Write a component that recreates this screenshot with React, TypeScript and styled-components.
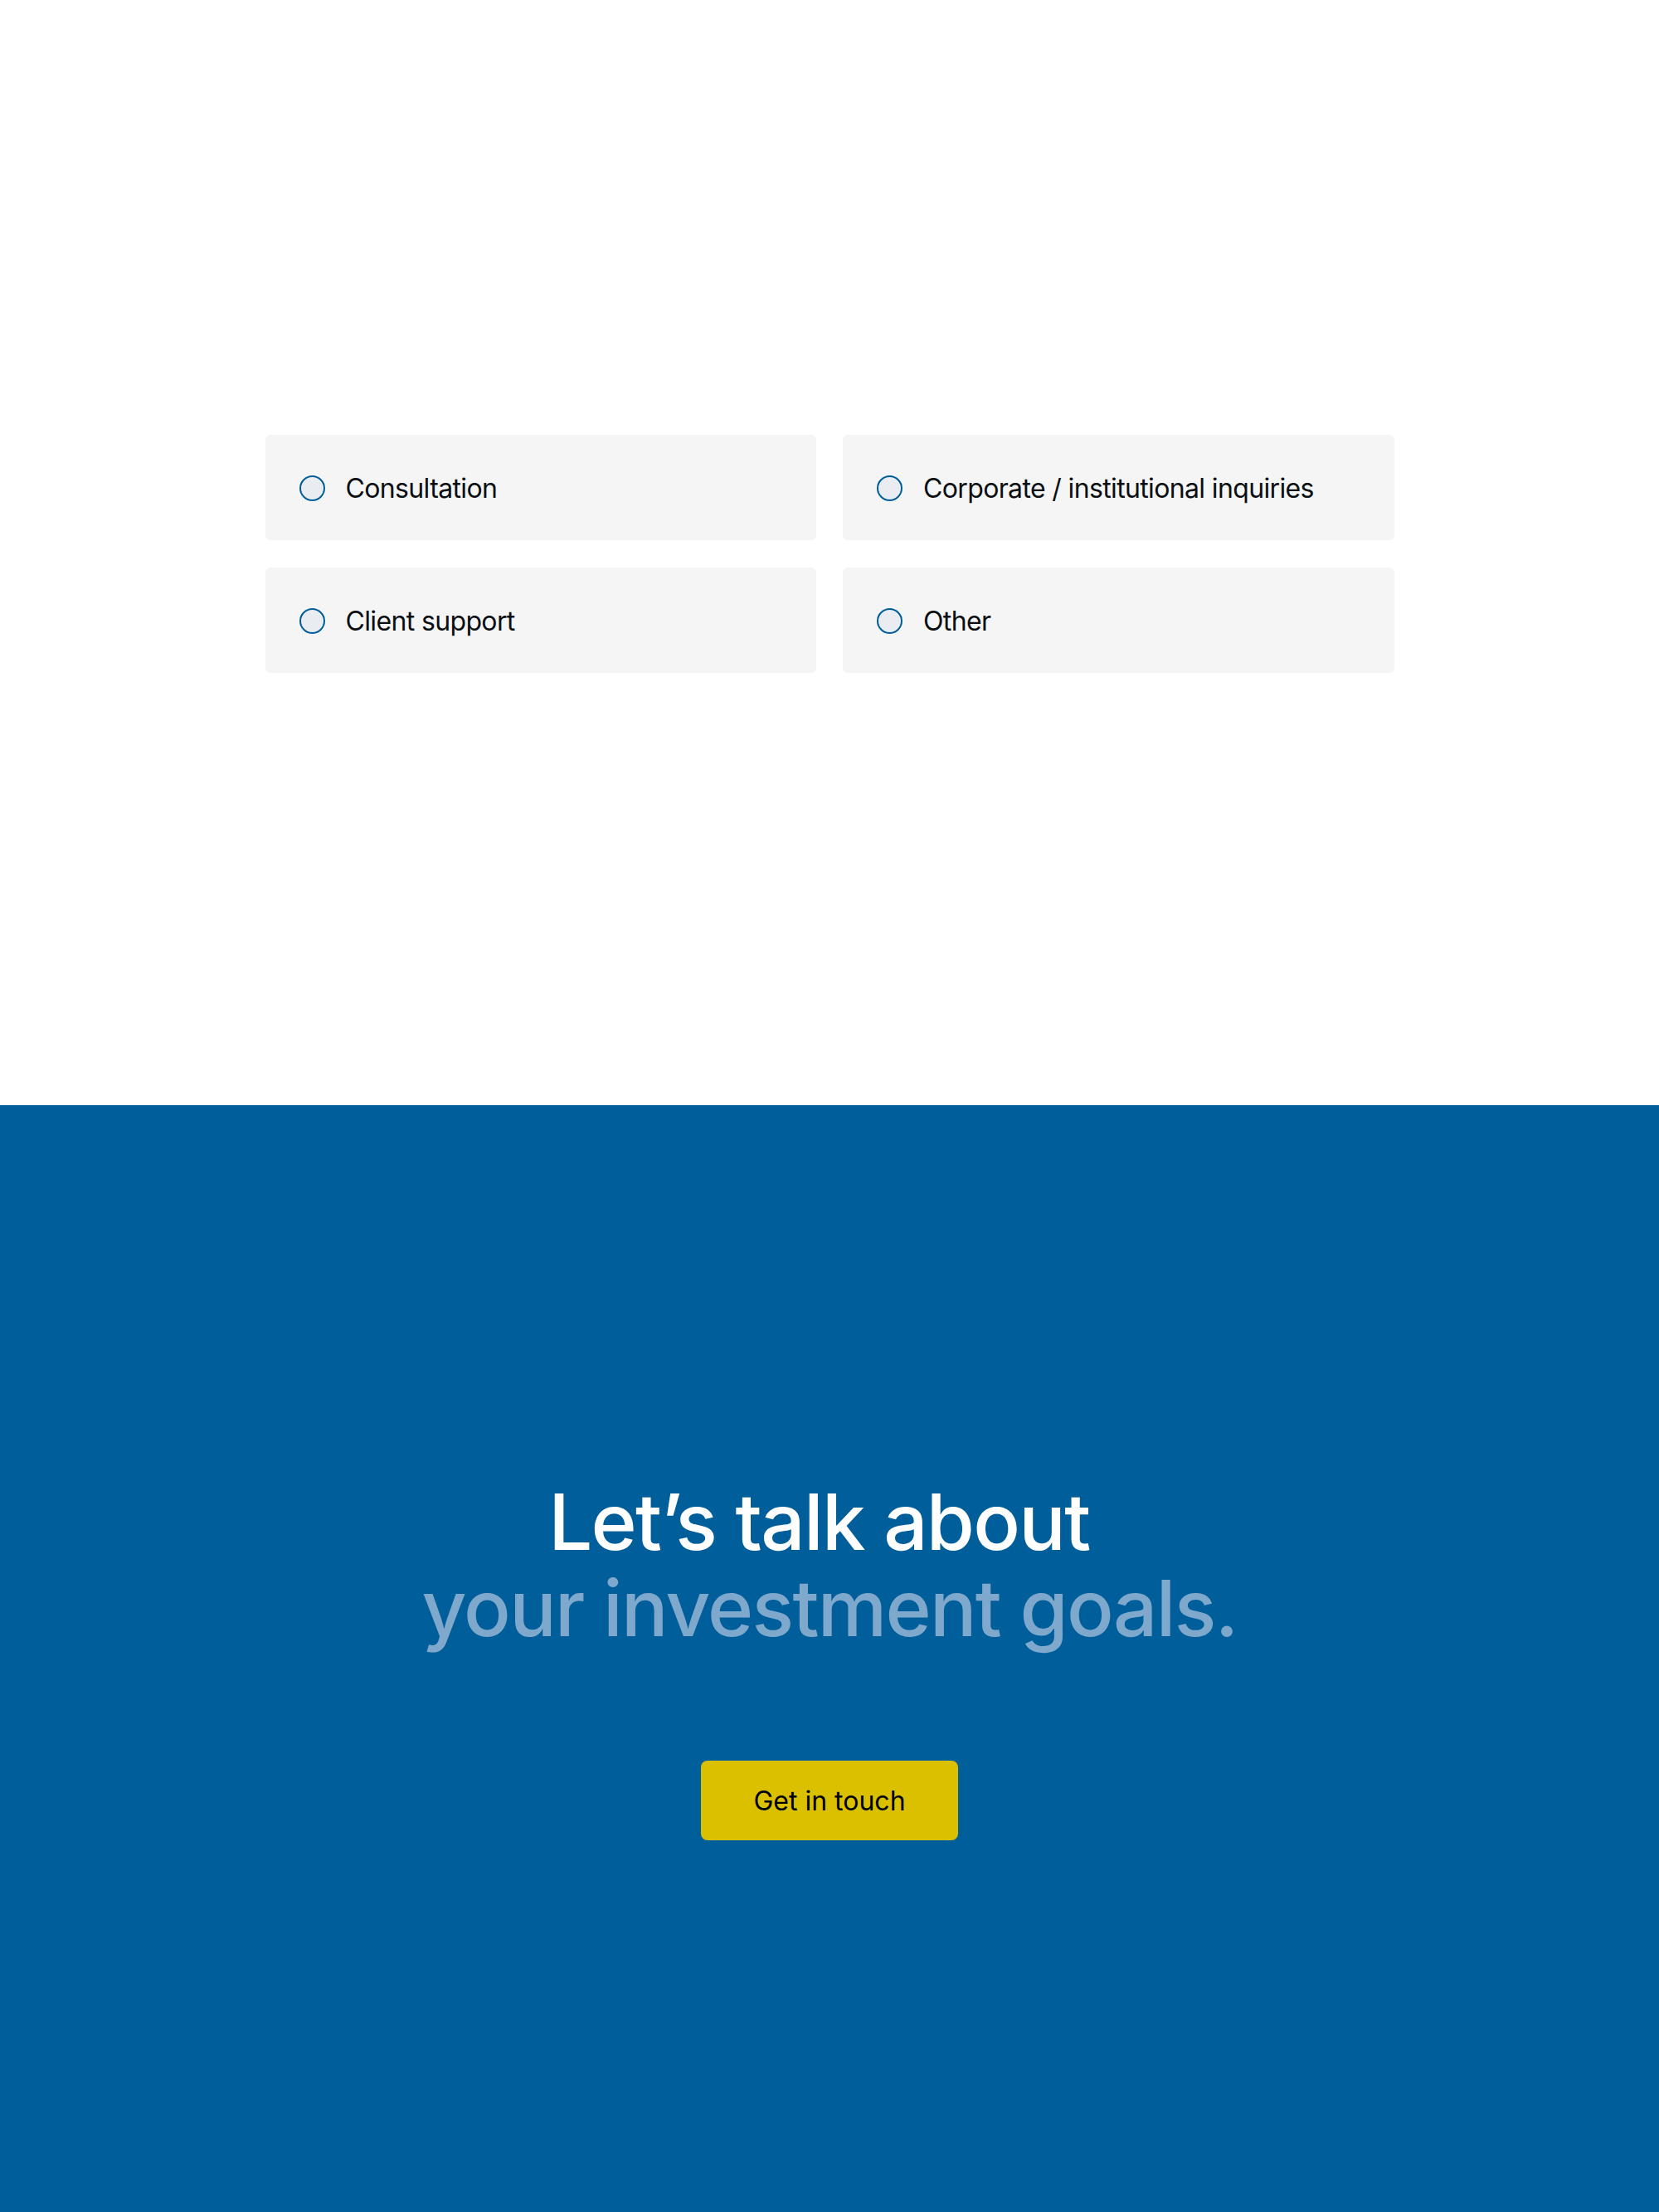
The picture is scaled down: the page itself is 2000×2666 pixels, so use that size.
import React, { useState } from 'react';
import styled, { createGlobalStyle } from 'styled-components';

const colors = {
    blue: '#005e9b',
    blueLight: '#7fa9cc',
    card: '#f5f5f5',
    radioFill: '#e9edf1',
    text: '#0b0f14',
    yellow: '#dbc000',
};

const GlobalStyle = createGlobalStyle`
  body {
    margin: 0;
    background: #ffffff;
    font-family: Inter, "Noto Sans", Arial, sans-serif;
  }
`;

const StyledTopSection = styled.section`
  height: 1332px;
  box-sizing: border-box;
  padding-top: 524px;
  background: #ffffff;
`;

const StyledOptions = styled.div`
  display: grid;
  grid-template-columns: 1fr 1fr;
  column-gap: 32px;
  row-gap: 33px;
  width: 1361px;
  margin: 0 auto;
`;

const StyledOption = styled.label`
  display: flex;
  align-items: center;
  gap: 25px;
  height: 127px;
  box-sizing: border-box;
  padding-left: 41px;
  padding-top: 2px;
  background: ${colors.card};
  border-radius: 6px;
  cursor: pointer;
`;

const StyledRadio = styled.span<{ checked: boolean }>`
  flex: none;
  width: 31px;
  height: 31px;
  box-sizing: border-box;
  border: 2px solid ${colors.blue};
  border-radius: 50%;
  background: ${({ checked }) => (checked ? colors.blue : colors.radioFill)};
  box-shadow: ${({ checked }) => (checked ? `inset 0 0 0 6px ${colors.radioFill}` : 'none')};
`;

const StyledOptionText = styled.span`
  font-size: 32px;
  line-height: 1;
  color: ${colors.text};
  letter-spacing: -0.02em;
`;

const StyledCta = styled.section`
  display: flex;
  flex-direction: column;
  align-items: center;
  height: 1334px;
  box-sizing: border-box;
  padding-top: 450px;
  background: ${colors.blue};
`;

const StyledHeading = styled.h2`
  margin: 0;
  font-size: 94px;
  line-height: 104px;
  font-weight: 500;
  letter-spacing: -0.018em;
  text-align: center;
  color: #ffffff;
`;

// the first line keeps the width of its trailing space, as in the design
const StyledHeadingLine = styled.span<{ muted?: boolean; trailing?: boolean }>`
  display: block;
  padding-right: ${({ trailing }) => (trailing ? '0.27em' : '0')};
  color: ${({ muted }) => (muted ? colors.blueLight : '#ffffff')};
`;

const StyledButton = styled.button`
  margin-top: 132px;
  width: 310px;
  height: 96px;
  border: none;
  border-radius: 8px;
  background: ${colors.yellow};
  color: #000000;
  font-family: inherit;
  font-size: 32px;
  font-weight: 400;
  cursor: pointer;
`;

const options = [
    'Consultation',
    'Corporate / institutional inquiries',
    'Client support',
    'Other',
];

export default function App() {
    const [selected, setSelected] = useState<string | null>(null);

    return (
        <>
            <GlobalStyle />
            <StyledTopSection>
                <StyledOptions>
                    {options.map((option) => (
                        <StyledOption key={option} onClick={() => setSelected(option)}>
                            <StyledRadio checked={selected === option} />
                            <StyledOptionText>{option}</StyledOptionText>
                        </StyledOption>
                    ))}
                </StyledOptions>
            </StyledTopSection>
            <StyledCta>
                <StyledHeading>
                    <StyledHeadingLine trailing>Let’s talk about</StyledHeadingLine>
                    <StyledHeadingLine muted>your investment goals.</StyledHeadingLine>
                </StyledHeading>
                <StyledButton type="button">Get in touch</StyledButton>
            </StyledCta>
        </>
    );
}
